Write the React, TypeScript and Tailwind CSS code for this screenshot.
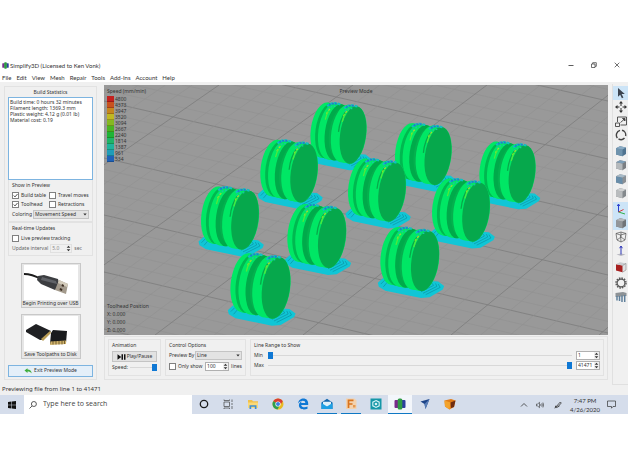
import { useState, type ReactNode } from "react";
import clsx from "clsx";

const SPEEDS: [string, string][] = [
  ["4800", "#c4211f"],
  ["4373", "#c8521f"],
  ["3947", "#c6861f"],
  ["3520", "#c0b822"],
  ["3094", "#86b822"],
  ["2667", "#4ab423"],
  ["2240", "#1fb436"],
  ["1814", "#1fb468"],
  ["1387", "#1fb49c"],
  ["961", "#1f9cb8"],
  ["534", "#1f62b8"],
];

const MENUS = ["File", "Edit", "View", "Mesh", "Repair", "Tools", "Add-Ins", "Account", "Help"];

/* x, y of the front face and the scale of each pulley, back to front */
const PULLEYS: [number, number, number][] = [
  [353, 135, 0.315],
  [438, 156, 0.318],
  [522, 174, 0.315],
  [304, 173, 0.323],
  [392, 192, 0.325],
  [476, 212, 0.325],
  [245, 220, 0.325],
  [332, 238, 0.33],
  [425, 261, 0.33],
  [276, 288, 0.337],
];

function Disc({ from, to, ry, face }: { from: number; to: number; ry: number; face: string }) {
  const steps = [0, 0.25, 0.5, 0.75, 1];
  return (
    <g>
      {steps.map((s) => {
        const x = from + (to - from) * s;
        return <ellipse key={s} rx="42" ry={ry} fill="#00e765" transform={`translate(${x} ${x * 0.17}) rotate(8)`} />;
      })}
      <ellipse rx="41" ry={ry} fill={face} transform={`translate(${to} ${to * 0.17}) rotate(8)`} />
    </g>
  );
}

function TopMarks({ x, y }: { x: number; y: number }) {
  return (
    <g transform={`translate(${x} ${y})`} fill="none" strokeWidth="4">
      <path d="M-18 12Q-8 1 8 2L26 6" stroke="#12bfc0" strokeWidth="7" strokeDasharray="9 3" />
      <path d="M-12 9Q-2 0 12 4" stroke="#2080cc" strokeWidth="6" strokeDasharray="6 4" />
      <path d="M-16 22Q-8 12 8 12" stroke="#1cc4a8" strokeDasharray="6 5" />
      <path d="M-20 36Q-14 22 -4 18" stroke="#9be02b" strokeDasharray="7 5" />
      <path d="M-24 54Q-20 36 -14 28" stroke="#4fe83c" strokeWidth="4" />
    </g>
  );
}

function Pulley({ x, y, k }: { x: number; y: number; k: number }) {
  return (
    <g transform={`translate(${x} ${y}) scale(${k})`}>
      <path d="M-143 66L-128 52L40 62L58 76L54 86L14 110L-12 112L-120 90L-140 78Z" fill="#10c6d6" />
      <g fill="none" stroke="#0b8fa0" strokeWidth="2">
        <path d="M2 102L46 80L40 70M-6 98L36 77L32 68M-12 93L26 74L20 66M-18 88L16 72" />
        <path d="M-134 70L-122 58M-126 78L-114 64" />
      </g>
      <Disc from={-92} to={-78} ry={88} face="#00b850" />
      <ellipse rx="36" ry="80" fill="#04a84a" transform="translate(-72 -12) rotate(8)" />
      <Disc from={-68} to={-48} ry={90} face="#00aa4a" />
      <ellipse rx="38" ry="82" fill="#05b04e" transform="translate(-38 -6) rotate(8)" />
      <Disc from={-27} to={0} ry={92} face="#06a84c" />
      <path d="M-46 -10Q-42 -50 -22 -76" fill="none" stroke="#08a84a" strokeWidth="4" />
      <TopMarks x={-64} y={-103} />
      <TopMarks x={-10} y={-96} />
    </g>
  );
}

function BuildPlate() {
  const a = Array.from({ length: 44 }, (_, i) => i - 18);
  const b = Array.from({ length: 44 }, (_, i) => i - 16);
  return (
    <svg viewBox="104 85 504 250" preserveAspectRatio="xMidYMid slice" className="block h-full w-full" role="img" aria-label="Toolpath preview">
      <rect x="104" y="85" width="504" height="250" fill="#999999" />
      {a.map((i) => (
        <line key={i} x1="104" y1={101 + i * 11.4} x2="608" y2={217 + i * 11.6} stroke={i % 5 === 0 ? "#7c7c7c" : "#909090"} strokeWidth={i % 5 === 0 ? 0.8 : 0.6} />
      ))}
      {b.map((i) => (
        <line key={i} x1={487 + i * 26.8} y1="85" x2={155 + i * 29.6} y2="335" stroke={i % 5 === 0 ? "#7c7c7c" : "#909090"} strokeWidth={i % 5 === 0 ? 0.8 : 0.6} />
      ))}
      {PULLEYS.map(([x, y, k]) => (
        <Pulley key={x} x={x} y={y} k={k} />
      ))}
    </svg>
  );
}

function Group({ title, className, children }: { title: string; className?: string; children: ReactNode }) {
  return (
    <section className={clsx("border border-[#e2e2e2] px-[3px]", className)}>
      <h2 className="h-[11px] leading-[10px]">{title}</h2>
      {children}
    </section>
  );
}

function Check({ label, checked = false, className }: { label: string; checked?: boolean; className?: string }) {
  const [on, setOn] = useState(checked);
  return (
    <label className={clsx("flex h-[9px] items-center gap-[2px] whitespace-nowrap", className)}>
      <span className="relative block size-[7px] shrink-0">
        <input type="checkbox" checked={on} onChange={() => setOn(!on)} className="block size-[7px] appearance-none border border-[#808080] bg-white" />
        {on && (
          <svg viewBox="0 0 7 7" className="pointer-events-none absolute inset-0 size-[7px]">
            <path d="M1.7 3.5L3 4.9L5.5 2" fill="none" stroke="#222" strokeWidth="0.8" />
          </svg>
        )}
      </span>
      {label}
    </label>
  );
}

function Pick({ id, options, className }: { id: string; options: string[]; className?: string }) {
  return (
    <span className={clsx("relative block h-[9px]", className)}>
      <select id={id} className="block h-[9px] w-full appearance-none border border-[#c4c4c4] bg-[#e3e3e3] pl-px leading-[7px]">
        {options.map((o) => (
          <option key={o}>{o}</option>
        ))}
      </select>
      <svg viewBox="0 0 4 3" className="pointer-events-none absolute top-[3px] right-[2px] h-[3px] w-[4px]">
        <path d="M0.3 0.5H3.7L2 2.5Z" fill="#333" />
      </svg>
    </span>
  );
}

function Spin({ id, label, value, className, disabled }: { id: string; label?: string; value: string; className?: string; disabled?: boolean }) {
  return (
    <span className={clsx("flex h-[9px] items-center border", className, disabled ? "border-[#e0e0e0] bg-[#f0f0f0] text-[#8a8a8a]" : "border-[#b0b0b0] bg-white")}>
      <input id={id} aria-label={label} defaultValue={value} disabled={disabled} className="h-[7px] w-full min-w-0 bg-transparent pl-px leading-[7px]" />
      <svg viewBox="0 0 5 7" className="h-[7px] w-[5px] shrink-0 bg-[#f0f0f0]">
        <path d="M0.7 2.8L2.5 0.7L4.3 2.8ZM0.7 4.2L2.5 6.3L4.3 4.2Z" fill="#333" />
      </svg>
    </span>
  );
}

function Slide({ id, value }: { id: string; value: number }) {
  return (
    <input
      id={id}
      type="range"
      defaultValue={value}
      className="h-[7px] min-w-0 flex-1 appearance-none bg-transparent [&::-webkit-slider-runnable-track]:h-px [&::-webkit-slider-runnable-track]:bg-[#d8d8d8] [&::-webkit-slider-thumb]:-mt-[3px] [&::-webkit-slider-thumb]:h-[7px] [&::-webkit-slider-thumb]:w-[5px] [&::-webkit-slider-thumb]:appearance-none [&::-webkit-slider-thumb]:bg-[#0f78d4]"
    />
  );
}

function UsbArt() {
  return (
    <svg viewBox="0 0 54 35" className="h-[35px] w-[54px] bg-white">
      <path d="M0 9Q8 9 17 14" fill="none" stroke="#1c1c1c" strokeWidth="2" />
      <path d="M14 11L20 10L34 14L36 22L31 25L17 19L13 15Z" fill="#3b3d40" />
      <path d="M18 12L32 16L33 19L17 15Z" fill="#606368" />
      <path d="M35 15L44 19L42 29L31 25Z" fill="#a39a8c" />
      <path d="M35 15L44 19L43 22L34 18Z" fill="#d3cbbb" />
      <path d="M38 19L40 20L39.5 22L37.5 21ZM36 23L38.4 24L38 26L35.6 25Z" fill="#3b2c20" />
    </svg>
  );
}

function CardArt() {
  return (
    <svg viewBox="0 0 54 35" className="h-[35px] w-[54px] bg-white">
      <path d="M2 14L12 8L27 15L19 24L16 24L2 16Z" fill="#1f2023" />
      <path d="M17 23L26 15L27 17L19 25Z" fill="#b89b54" />
      <path d="M29 14L43 15L42 27L26 28L27 17Z" fill="#191a1d" />
      <path d="M26.500 25.500L42 24.500V28L26 29Z" fill="#d0b26a" />
      <path d="M29 25V28.500M32 25V28.500M35 25V28.500M38 25V28.500M40.500 25V28" stroke="#4d3d1c" strokeWidth="0.7" />
    </svg>
  );
}

function Cube({ front, top, side }: { front: string; top: string; side: string }) {
  return (
    <>
      <path d="M1 3.200L5 1.200L11 2.400V9L7.500 11.200L1 9.600Z" fill={side} />
      <path d="M1 3.200L7.500 4.600V11.200L1 9.600Z" fill={front} />
      <path d="M1 3.200L5 1.200L11 2.400L7.500 4.600Z" fill={top} />
    </>
  );
}

const TOOLS: { name: string; gap?: string; on?: boolean; art: ReactNode }[] = [
  { name: "Select", on: true, art: <path d="M3 1L9.800 7H6.600L8.400 10.400L6.900 11.200L5.200 7.800L3 9.800Z" fill="#3c4450" /> },
  {
    name: "Move",
    art: (
      <g fill="#333">
        <path d="M6 0L8 2.500H4ZM6 12L8 9.500H4ZM0 6L2.500 4V8ZM12 6L9.500 4V8Z" />
        <path d="M6 2V5M6 7V10M2 6H4.500M7.500 6H10" stroke="#333" />
      </g>
    ),
  },
  {
    name: "Scale",
    art: (
      <g fill="none" stroke="#444" strokeWidth="0.9">
        <path d="M2.500 7V2H11.500V10H5.500M0.500 8H4.500V11.500H0.500ZM5.500 7.500L9 4.500" />
        <path d="M7.500 3.500H10V6Z" fill="#444" />
      </g>
    ),
  },
  {
    name: "Rotate",
    art: <path d="M2.400 9A4.800 4.800 0 0 1 5 1.400M7 1.300A4.800 4.800 0 0 1 10.600 7M9.500 9A4.800 4.800 0 0 1 3.500 9.900" fill="none" stroke="#444" strokeWidth="1.400" />,
  },
  { name: "Default view", gap: "mt-[2px]", art: <Cube front="#6f93ad" top="#8aabc4" side="#4f7390" /> },
  { name: "Top view", art: <Cube front="#b5b9bc" top="#7f9fb8" side="#7b7f83" /> },
  { name: "Front view", art: <Cube front="#688da9" top="#a7b9c6" side="#8a8f94" /> },
  { name: "Side view", art: <Cube front="#b9bcbe" top="#cfd1d2" side="#83888c" /> },
  {
    name: "Coordinate axes",
    gap: "mt-[2px]",
    on: true,
    art: (
      <g fill="none" strokeWidth="1">
        <path d="M3.500 9V1.500M2.300 3L3.500 1L4.700 3" stroke="#2b3fd0" />
        <path d="M3.500 9L10 11" stroke="#31b04c" />
        <path d="M3.500 9L8.500 6.500" stroke="#d43a3a" />
      </g>
    ),
  },
  { name: "Solid model", on: true, art: <Cube front="#92969a" top="#b4b7ba" side="#6f7377" /> },
  {
    name: "Wireframe",
    art: <path d="M1 2.500L6 1L11 2.500L10 9L6 11L2 9ZM1 2.500L5.500 4L11 2.500M5.500 4L6 11M6 1V6L2 9M6 6L10 9" fill="none" stroke="#555" strokeWidth="0.700" />,
  },
  {
    name: "Normals",
    art: (
      <>
        <path d="M1.500 9.500L6 8.500L10.500 9.500L6 11Z" fill="#b8b8c0" />
        <path d="M6 9.500V1.500M4.600 3.200L6 1L7.400 3.200" fill="none" stroke="#2b35b8" />
      </>
    ),
  },
  {
    name: "Cross section",
    gap: "mt-[2px]",
    art: (
      <>
        <Cube front="#a8201f" top="#c9cccf" side="#dfe1e3" />
        <path d="M7.500 4.600L11 2.400V9L7.500 11.200" fill="none" stroke="#777" strokeWidth="0.500" />
      </>
    ),
  },
  {
    name: "Machine control",
    gap: "mt-[2px]",
    art: (
      <>
        <circle cx="6" cy="6" r="5" fill="none" stroke="#555" strokeWidth="1.400" strokeDasharray="1.500 1.100" />
        <circle cx="6" cy="6" r="3.900" fill="none" stroke="#555" strokeWidth="1.200" />
      </>
    ),
  },
  {
    name: "Supports",
    art: (
      <>
        <path d="M0.500 2L8 1L11.500 2V5L0.500 6Z" fill="#8d9296" />
        <path d="M2 5V9.500M4.500 5V10M7 4.500V11M9.700 4V11" stroke="#5f7f9a" strokeWidth="1.500" />
      </>
    ),
  },
];

function AppLogo({ className }: { className: string }) {
  return (
    <svg viewBox="0 0 12 12" className={className}>
      <rect x="0.500" y="2" width="4" height="8" rx="1" fill="#7a2a8c" />
      <rect x="7.500" y="2" width="4" height="8" rx="1" fill="#2c3f9e" />
      <rect x="3.700" y="0.500" width="4.600" height="11" rx="1.500" fill="#2f9b45" />
    </svg>
  );
}

const TASKS: { name: string; w: string; state?: "open" | "active"; art: ReactNode }[] = [
  { name: "Cortana", w: "w-6", art: <circle cx="6" cy="6" r="3.700" fill="none" stroke="#1b1b1b" strokeWidth="1.300" /> },
  {
    name: "Task View",
    w: "w-6",
    art: <path d="M2 4H7.500V8.500H2ZM2 1.500V2.500H7.500V1.500M2 11V10H7.500V11M10 1.500V4M10 5V7M10 8V11" fill="none" stroke="#444" strokeWidth="0.700" />,
  },
  {
    name: "File Explorer",
    w: "w-[25px]",
    art: (
      <>
        <path d="M1 2H5L6 3.200H11V10H1Z" fill="#f2c14a" />
        <path d="M1 4.500H11V10H1Z" fill="#fbd978" />
        <path d="M2.500 11V7.200H9.500V11H7.800V8.800H4.200V11Z" fill="#3f8fd0" />
      </>
    ),
  },
  {
    name: "Chrome",
    w: "w-[25px]",
    art: (
      <>
        <circle cx="6" cy="6" r="5.500" fill="#e8b923" />
        <path d="M6 6L1.240 3.250A5.500 5.500 0 0 1 10.760 3.250Z" fill="#d93f32" />
        <path d="M6 6L1.240 3.250A5.500 5.500 0 0 0 5.500 11.480L8 7Z" fill="#2f9e4f" />
        <path d="M6 3.250H10.760L9 6Z" fill="#d93f32" />
        <circle cx="6" cy="6" r="2.600" fill="#fff" />
        <circle cx="6" cy="6" r="2" fill="#3f7fe0" />
      </>
    ),
  },
  {
    name: "Edge",
    w: "w-[25px]",
    art: <path d="M1 5.500C1.600 2 4 0.600 6.400 0.600C9.500 0.600 11.200 2.800 11.200 5.500V6.900H4.200C4.400 9.500 8 9.900 10.500 8.500V10.700C7 12.400 1.800 11.500 1.900 7.200C2 5.300 3.200 4 4.600 3.300C4.200 4 4.200 4.700 4.200 5H8.300C8.300 3.500 7.500 2.800 5.900 2.800C4 2.800 2.200 3.900 1 5.500Z" fill="#0f78d4" />,
  },
  {
    name: "Mail",
    w: "mx-[2px] w-5",
    state: "open",
    art: (
      <>
        <path d="M0.500 4.500L6 0.800L11.500 4.500V11H0.500Z" fill="#1467ad" />
        <path d="M2 3.800H10V7L6 9L2 7Z" fill="#dff1fb" />
        <path d="M0.500 5L6 8.500L11.500 5V11H0.500Z" fill="#1ea0e4" />
      </>
    ),
  },
  {
    name: "Fusion 360",
    w: "mx-[2px] w-5",
    state: "open",
    art: (
      <>
        <path d="M1 0.500H9.500L11.500 2.500V11H1Z" fill="#f3d2ae" />
        <path d="M3.500 10V2.300H8.500M3.500 6H7.500" fill="none" stroke="#d9741f" strokeWidth="1.700" />
        <path d="M8 7H10.500V9.500H8Z" fill="#e59a52" />
      </>
    ),
  },
  {
    name: "Slicer",
    w: "w-[25px]",
    art: (
      <>
        <rect x="0.500" y="0.500" width="11" height="11" fill="#1697a8" />
        <path d="M6 2.500L9.200 4.200V7.800L6 9.500L2.800 7.800V4.200Z" fill="none" stroke="#d6f3f5" strokeWidth="1.100" />
        <circle cx="6" cy="6" r="1.300" fill="#d6f3f5" />
      </>
    ),
  },
  { name: "Simplify3D", w: "w-6", state: "active", art: null },
  {
    name: "Plane",
    w: "w-[25px]",
    art: (
      <>
        <path d="M1.500 3.500L10.500 1L6.500 11L5.500 6Z" fill="#1d4488" />
        <path d="M5.500 6L10.500 1L6.500 11Z" fill="#5b7fb8" />
      </>
    ),
  },
  {
    name: "Meshmixer",
    w: "w-[25px]",
    art: (
      <>
        <path d="M0.500 2.500L7 1L11.500 2.500L10 9L5.500 11.500L1 8.500Z" fill="#e07b16" />
        <path d="M0.500 2.500L6.500 4.500L5.500 11.500L1 8.500Z" fill="#f3a32c" />
        <path d="M6.500 4.500L11.500 2.500L10 9L7 10Z" fill="#6e2d12" />
      </>
    ),
  },
];

export default function App() {
  return (
    <div className="min-h-screen bg-white pt-[57px] font-['Noto_Sans','Open_Sans',sans-serif] text-[5px] text-[#333]">
      <header>
        <div className="flex h-4 items-center pl-[2px]">
          <AppLogo className="mr-px size-[7px]" />
          <h1 className="flex-1 font-['Lato',sans-serif] text-[6px]">Simplify3D (Licensed to Ken Vonk)</h1>
          <div className="flex">
            <button aria-label="Minimize" className="grid h-4 w-[22px] place-items-center">
              <svg viewBox="0 0 6 6" className="size-[6px]"><path d="M0.500 3.500H5.500" stroke="currentColor" strokeWidth="0.800" /></svg>
            </button>
            <button aria-label="Restore" className="grid h-4 w-[23px] place-items-center">
              <svg viewBox="0 0 6 6" className="size-[6px]"><path d="M0.500 2H4V5.500H0.500ZM1.700 2V0.700H5.300V4.300H4" fill="none" stroke="currentColor" strokeWidth="0.700" /></svg>
            </button>
            <button aria-label="Close" className="grid h-4 w-[23px] place-items-center">
              <svg viewBox="0 0 6 6" className="size-[6px]"><path d="M0.700 0.700L5.300 5.300M5.300 0.700L0.700 5.300" stroke="currentColor" strokeWidth="0.700" /></svg>
            </button>
          </div>
        </div>
        <nav className="flex h-[9px] items-center gap-[5px] pl-[2px] font-['Lato',sans-serif] text-[6px] leading-[7px]">
          {MENUS.map((m) => (
            <button key={m}>{m}</button>
          ))}
        </nav>
      </header>

      <div className="flex bg-[#f0f0f0]">
        <div className="min-w-0 flex-1">
          <div className="flex pt-[3px]">
            <aside className="mt-px ml-1 w-[93px] shrink-0 border border-[#e2e2e2] px-[3px]">
              <h2 className="h-[10px] text-center leading-[10px]">Build Statistics</h2>
              <div className="h-[83px] border border-[#7db4e0] bg-white px-px pt-px leading-[6px]">
                <p>Build time: 0 hours 32 minutes</p>
                <p>Filament length: 1369.3 mm</p>
                <p>Plastic weight: 4.12 g (0.01 lb)</p>
                <p>Material cost: 0.19</p>
              </div>
              <Group title="Show in Preview" className="h-[42px] border-t-0">
                <div className="grid grid-cols-[37px_1fr]">
                  <Check label="Build table" checked />
                  <Check label="Travel moves" />
                  <Check label="Toolhead" checked />
                  <Check label="Retractions" />
                </div>
                <div className="mt-px flex items-center gap-px">
                  <label htmlFor="coloring">Coloring</label>
                  <Pick id="coloring" options={["Movement Speed", "Feature Type"]} className="ml-auto w-[57px]" />
                </div>
              </Group>
              <Group title="Real-time Updates" className="h-[34px]">
                <Check label="Live preview tracking" />
                <div className="mt-px flex items-center gap-[2px] text-[#666]">
                  <label htmlFor="interval">Update interval</label>
                  <Spin id="interval" value="5.0" disabled className="w-[22px]" />
                  sec
                </div>
              </Group>
              <div className="flex flex-col items-center gap-[6px] pt-[7px]">
                <button className="flex h-[45px] w-[60px] flex-col items-center border border-[#c8c8c8] bg-[#e6e6e6] pt-px whitespace-nowrap">
                  <UsbArt />
                  <span className="leading-[7px]">Begin Printing over USB</span>
                </button>
                <button className="flex h-[45px] w-[60px] flex-col items-center border border-[#c8c8c8] bg-[#e6e6e6] pt-px whitespace-nowrap">
                  <CardArt />
                  <span className="leading-[7px]">Save Toolpaths to Disk</span>
                </button>
                <button className="flex h-3 w-full items-center justify-center gap-[2px] border border-[#7db4e0] bg-[#e4eff9]">
                  <svg viewBox="0 0 8 6" className="h-[6px] w-[8px]">
                    <path d="M0.500 2.500L3.500 0.300V1.600C6 1.600 7.500 3 7.700 5.500C6.500 4 5.500 3.600 3.500 3.600V4.900Z" fill="#3fae3c" />
                  </svg>
                  Exit Preview Mode
                </button>
              </div>
              <div className="h-[2px]" />
            </aside>

            <div className="ml-[7px] flex min-w-0 flex-1 flex-col">
              <main className="relative h-[250px]">
                <BuildPlate />
                <div className="absolute top-[3px] left-[3px]">
                  <p className="leading-[7px]">Speed (mm/min)</p>
                  <ul className="mt-px">
                    {SPEEDS.map(([v, c]) => (
                      <li key={v} className="flex h-[6px] items-center gap-px leading-[6px]">
                        <span className="h-[6px] w-[7px] border-b border-black/20" style={{ background: c }} />
                        {v}
                      </li>
                    ))}
                  </ul>
                </div>
                <p className="absolute inset-x-0 top-[3px] text-center leading-[7px]">Preview Mode</p>
                <div className="absolute bottom-px left-[3px] leading-[8px]">
                  <p>Toolhead Position</p>
                  <p>X: 0.000</p>
                  <p>Y: 0.000</p>
                  <p>Z: 0.000</p>
                </div>
              </main>
              <div className="mt-px flex gap-1 border border-[#e2e2e2] px-[3px] pt-[2px] pb-[3px]">
                <Group title="Animation" className="h-[37px] w-[53px]">
                  <button className="flex h-[11px] w-full items-center justify-center gap-px border border-[#c4c4c4] bg-[#e2e2e2]">
                    <svg viewBox="0 0 9 6" className="h-[6px] w-[9px]">
                      <path d="M0.500 0.300L4.300 3L0.500 5.700ZM4.500 0.300H6V5.700H4.500ZM7 0.300H8.500V5.700H7Z" fill="#111" />
                    </svg>
                    Play/Pause
                  </button>
                  <div className="mt-[2px] flex items-center gap-[2px]">
                    <label htmlFor="speed">Speed:</label>
                    <Slide id="speed" value={100} />
                  </div>
                </Group>
                <Group title="Control Options" className="h-[37px] w-[81px]">
                  <div className="flex items-center">
                    <label htmlFor="by">Preview By</label>
                    <Pick id="by" options={["Line", "Layer"]} className="ml-auto w-[47px]" />
                  </div>
                  <div className="mt-[2px] flex items-center gap-[2px]">
                    <Check label="Only show" />
                    <Spin id="count" label="Lines shown" value="100" className="ml-auto w-[24px]" />
                    lines
                  </div>
                </Group>
                <Group title="Line Range to Show" className="h-[37px] min-w-0 flex-1">
                  <div className="flex items-center gap-1">
                    <label htmlFor="min" className="w-[10px]">Min</label>
                    <Slide id="min" value={0} />
                    <Spin id="minline" label="First line" value="1" className="w-[24px]" />
                  </div>
                  <div className="mt-px flex items-center gap-1">
                    <label htmlFor="max" className="w-[10px]">Max</label>
                    <Slide id="max" value={100} />
                    <Spin id="maxline" label="Last line" value="41471" className="w-[24px]" />
                  </div>
                </Group>
              </div>
            </div>
          </div>
          <p className="h-[15px] pt-[4px] pl-[2px] text-[6px] leading-[11px]">Previewing file from line 1 to 41471</p>
        </div>

        <div role="toolbar" aria-label="View tools" className="mt-[2px] mb-[10px] ml-1 flex w-4 flex-col items-center border-b border-l border-[#e0e0e0] pt-[2px]">
          {TOOLS.map((t) => (
            <button key={t.name} aria-label={t.name} className={clsx("grid h-[14px] w-full place-items-center", t.gap, t.on && "bg-[#cce4f7]")}>
              <svg viewBox="0 0 12 12" className="size-3">{t.art}</svg>
            </button>
          ))}
        </div>
      </div>

      <footer className="flex h-[19px] items-center bg-[#d5ddeb]">
        <button aria-label="Start" className="grid h-full w-6 place-items-center">
          <svg viewBox="0 0 8 8" className="size-2"><path d="M0 1.100L3.500 0.600V3.800H0ZM4 0.500L8 0V3.800H4ZM0 4.200H3.500V7.400L0 6.900ZM4 4.200H8V8L4 7.500Z" fill="#111" /></svg>
        </button>
        <label className="flex h-full w-[168px] items-center gap-[6px] bg-white pl-[5px]">
          <svg viewBox="0 0 8 8" className="size-2 shrink-0"><path d="M0.500 7.500L3 5" stroke="#333" strokeWidth="0.800" /><circle cx="4.900" cy="3" r="2.500" fill="none" stroke="#333" strokeWidth="0.800" /></svg>
          <input aria-label="Search" placeholder="Type here to search" className="w-full min-w-0 font-['Open_Sans',sans-serif] text-[7px] placeholder:text-[#444]" />
        </label>
        {TASKS.map((t) => (
          <button key={t.name} aria-label={t.name} className={clsx("grid h-full shrink-0 place-items-center border-b", t.w, t.state ? "border-[#0f78c4]" : "border-transparent", t.state === "active" && "bg-[#f3f6fb]")}>
            {t.art ? <svg viewBox="0 0 12 12" className="size-3">{t.art}</svg> : <AppLogo className="size-3" />}
          </button>
        ))}
        <div className="ml-auto flex items-center pr-3 font-['Lato',sans-serif]">
          <svg viewBox="0 0 8 8" className="mr-2 size-2"><path d="M1 5.500L4 2.500L7 5.500" fill="none" stroke="#333" strokeWidth="0.800" /></svg>
          <svg viewBox="0 0 8 8" className="mr-[10px] size-2"><path d="M0.500 3H1.700L3.500 1.300V6.700L1.700 5H0.500ZM4.700 3Q5.300 4 4.700 5M5.800 2.200Q7 4 5.800 5.800M6.900 1.500Q8.500 4 6.900 6.500" fill="none" stroke="#333" strokeWidth="0.600" /></svg>
          <svg viewBox="0 0 8 8" className="mr-2 size-2"><path d="M0.500 7Q3 6.500 2.500 5Q1 4.500 1.500 6T5.500 5M3.200 4.500L6.300 1L7.300 2L4.300 5.300Z" fill="none" stroke="#333" strokeWidth="0.800" /></svg>
          <time className="w-[30px] text-center text-[6px] leading-[9px] whitespace-nowrap">
            <span className="block">7:47 PM</span>
            <span className="block">4/26/2020</span>
          </time>
          <svg viewBox="0 0 9 9" className="ml-[7px] size-[9px]"><path d="M0.500 1H8.500V6.500H6L4.500 8.200V6.500H0.500Z" fill="none" stroke="#333" strokeWidth="0.700" /></svg>
        </div>
      </footer>
    </div>
  );
}
